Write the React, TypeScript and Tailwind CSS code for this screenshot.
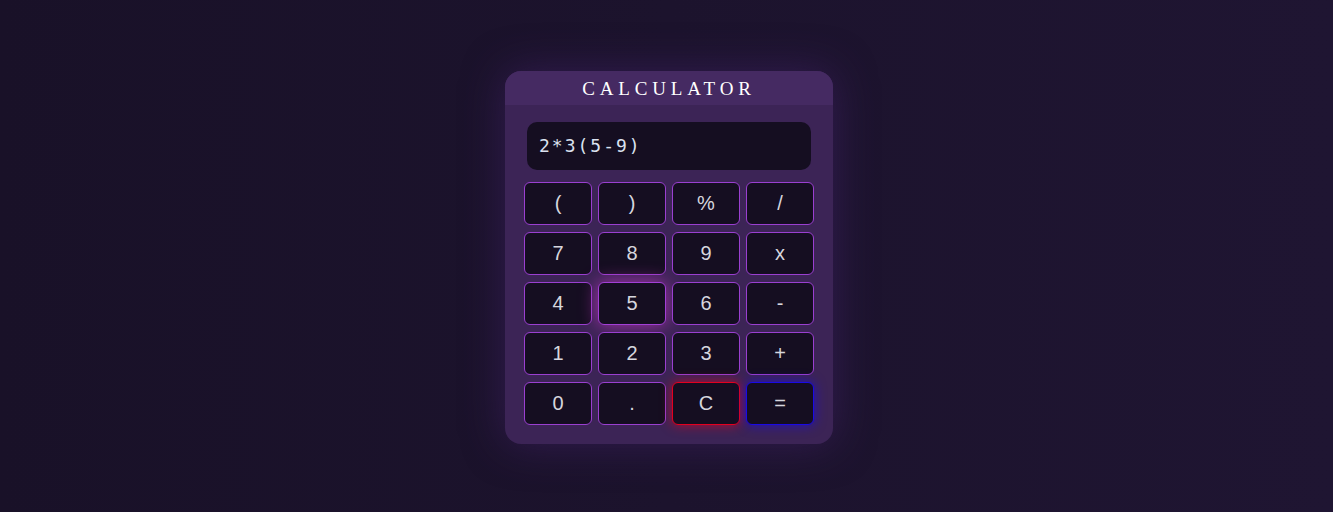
import React from 'react';

const keys = [
  '(', ')', '%', '/',
  '7', '8', '9', 'x',
  '4', '5', '6', '-',
  '1', '2', '3', '+',
  '0', '.', 'C', '=',
];

const keyClass = (k: string) => {
  if (k === 'C') return 'border-[#e3001f] shadow-[0_0_12px_rgba(227,0,31,0.7)]';
  if (k === '=') return 'border-[#1a0ae6] shadow-[0_0_12px_rgba(26,10,230,0.75)]';
  if (k === '5') return 'border-[#a23fd6] shadow-[0_0_18px_rgba(190,50,190,0.8)]';
  return 'border-[#9a3fd0]';
};

const App: React.FC = () => {
  return (
    <div className="min-h-screen flex items-center justify-center pl-[5px] pt-[2px] bg-gradient-to-r from-[#191128] to-[#1f1532]">
      <div className="w-[328px] rounded-2xl overflow-hidden bg-[#3c2456] shadow-[0_0_40px_rgba(70,35,110,0.55)]">
        <div className="h-[34px] pt-[3px] flex items-center justify-center bg-[#452a62]">
          <h1 className="text-white text-[19px] tracking-[4.8px]" style={{ fontFamily: '"Liberation Serif", serif' }}>
            CALCULATOR
          </h1>
        </div>

        <div className="px-[19px] pt-[17px] pb-[19px]">
          <div className="mx-[3px] h-[48px] rounded-[10px] bg-[#150e21] flex items-center px-3">
            <span className="text-[#dbe2f0] text-[18px] tracking-[2px]" style={{ fontFamily: '"DejaVu Sans Mono", monospace' }}>
              2*3(5-9)
            </span>
          </div>

          <div className="mt-[12px] grid grid-cols-4 gap-x-[6px] gap-y-[7px]">
            {keys.map((k) => (
              <button
                key={k}
                className={`h-[43px] rounded-md border bg-[#150e21] text-[#d6d6de] text-[20px] flex items-center justify-center ${keyClass(k)}`}
                style={{ fontFamily: '"Liberation Sans", Arial, sans-serif' }}
              >
                {k}
              </button>
            ))}
          </div>
        </div>
      </div>
    </div>
  );
};

export default App;
